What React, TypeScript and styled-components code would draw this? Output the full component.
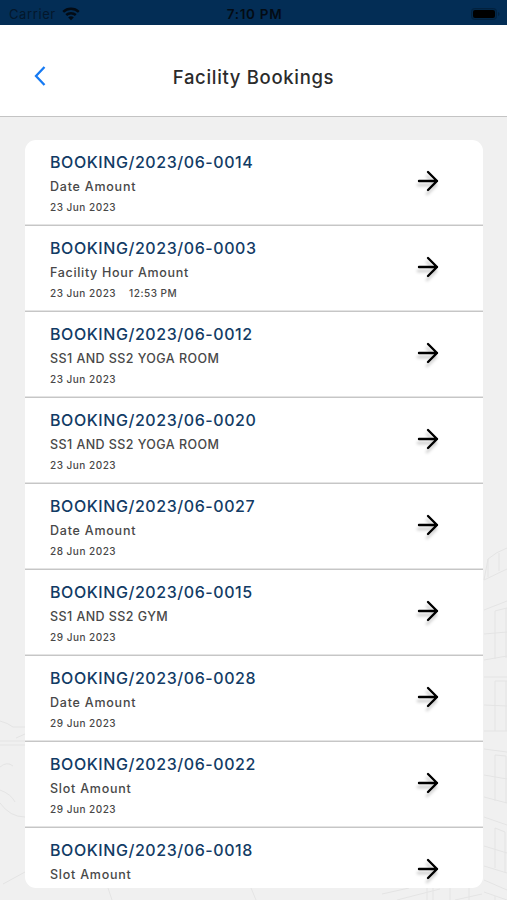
import React from "react";
import styled, { createGlobalStyle } from "styled-components";

const GlobalStyle = createGlobalStyle`
  * { box-sizing: border-box; }
  html, body, #root { margin: 0; height: 100%; }
  body { overflow: hidden; font-family: "Inter", "Liberation Sans", sans-serif; }
`;

const Screen = styled.div`
  width: 100%;
  height: 900px;
  display: flex;
  flex-direction: column;
  background: #f0f0f0;
  overflow: hidden;
`;

const StatusBar = styled.div`
  height: 25px;
  flex: none;
  display: grid;
  grid-template-columns: 1fr auto 1fr;
  align-items: center;
  padding: 2px 7px 0 9px;
  background: #032d55;
  color: #030b14;
  font-size: 13px;
`;

const Carrier = styled.div`
  display: flex;
  align-items: center;
  gap: 6px;
  letter-spacing: 0.6px;
  color: #04172b;
`;

const Clock = styled.div`
  font-weight: 600;
  font-size: 13.5px;
  letter-spacing: 0.7px;
`;

const Battery = styled.svg`
  justify-self: end;
  display: block;
`;

const Header = styled.header`
  height: 92px;
  flex: none;
  display: grid;
  grid-template-columns: 60px 1fr 60px;
  align-items: center;
  padding-top: 13px;
  background: #fff;
  border-bottom: 1px solid #c4c4c4;
`;

const BackButton = styled.button`
  border: 0;
  background: none;
  padding: 0 0 2px 33px;
  display: flex;
`;

const Title = styled.h1`
  margin: 0;
  text-align: center;
  font-size: 18.5px;
  line-height: 24px;
  font-weight: 500;
  letter-spacing: 0.68px;
  color: #2b2b2b;
`;

const Content = styled.main`
  flex: 1;
  min-height: 0;
  position: relative;
  padding: 23px 24px 12px 25px;
`;

const Backdrop = styled.svg`
  position: absolute;
  right: 0;
  bottom: 0;
`;

const List = styled.ul`
  position: relative;
  margin: 0;
  padding: 0;
  height: 100%;
  list-style: none;
  overflow: hidden;
  background: #fff;
  border-radius: 11px;
`;

const Row = styled.li`
  height: 86px;
  display: flex;
  align-items: center;
  justify-content: space-between;
  padding: 0 44px 0 25px;
  border-bottom: 1px solid #c6c6c6;
  box-shadow: inset 0 -1px #e4e4e4;
`;

const Details = styled.div`
  height: 100%;
  padding-top: 11px;
  white-space: nowrap;
`;

const Reference = styled.div`
  font-size: 16px;
  line-height: 22px;
  font-weight: 500;
  letter-spacing: 0.57px;
  color: #123b65;
`;

const Facility = styled.div<{ $tracking: number }>`
  padding-top: 5px;
  font-size: 12.5px;
  line-height: 18px;
  font-weight: 500;
  letter-spacing: ${(p) => p.$tracking}px;
  color: #484848;
`;

const Schedule = styled.div`
  display: flex;
  gap: 13px;
  padding-top: 5px;
  font-size: 10px;
  line-height: 13px;
  font-weight: 500;
  letter-spacing: 0.5px;
  color: #484848;
`;

const Arrow = styled.svg`
  display: block;
  overflow: visible;
  margin-top: -4px;
  filter: drop-shadow(-1px 4px 1.5px rgba(0, 0, 0, 0.22));
`;

type Booking = {
  id: string;
  facility: string;
  date?: string;
  time?: string;
  tracking: number;
};

const bookings: Booking[] = [
  { id: "0014", facility: "Date Amount", date: "23 Jun 2023", tracking: 0.77 },
  { id: "0003", facility: "Facility Hour Amount", date: "23 Jun 2023", time: "12:53 PM", tracking: 0.68 },
  { id: "0012", facility: "SS1 AND SS2 YOGA ROOM", date: "23 Jun 2023", tracking: 0.43 },
  { id: "0020", facility: "SS1 AND SS2 YOGA ROOM", date: "23 Jun 2023", tracking: 0.43 },
  { id: "0027", facility: "Date Amount", date: "28 Jun 2023", tracking: 0.77 },
  { id: "0015", facility: "SS1 AND SS2 GYM", date: "29 Jun 2023", tracking: 0.43 },
  { id: "0028", facility: "Date Amount", date: "29 Jun 2023", tracking: 0.77 },
  { id: "0022", facility: "Slot Amount", date: "29 Jun 2023", tracking: 0.77 },
  { id: "0018", facility: "Slot Amount", tracking: 0.77 },
];

const WifiIcon = () => (
  <svg width="18" height="14" viewBox="0 0 18 14" fill="none" stroke="#030b14" strokeWidth="2.5">
    <path d="M1.2 4.8C5.6.7 12.4.7 16.8 4.8" />
    <path d="M4.2 8C6.9 5.5 11.1 5.5 13.8 8" />
    <path d="M9 13.2 6.2 10.4C7.8 9 10.2 9 11.8 10.4Z" fill="#030b14" stroke="none" />
  </svg>
);

const BuildingSketch = () => (
  <Backdrop width="507" height="370" viewBox="0 530 507 370" fill="none" stroke="#e4e4e4" aria-hidden="true">
    <path d="M484 580 488 559Q496 552 507 548M488 577V559M499 571V553M484 580 507 569M484 610 507 601M495 659V611L507 608M506 608V658M484 634 507 632M484 660 507 656M484 677H507M495 731V681H507M506 681V731M484 705 507 706M484 731H507M484 749 507 752M495 801V755L506 756V803M484 775 507 779M484 797 507 803M484 817 507 825M495 868V828L505 832V873M484 846 507 853M484 866 507 873M484 880 507 890" />
    <path d="M0 721Q8 723 13 727L25 727M0 741H25M0 745H25M0 767Q7 761 13 766M0 790Q11 794 15 802M0 803Q10 817 25 817M16 738 25 734M3 884 25 872M108 888 112 900M251 888 256 900M382 894 409 888M397 900 440 889M427 888V900M433 888V900M450 888V900M455 900 482 894M469 888V900M484 892 507 900M495 896V900" />
  </Backdrop>
);

export default function App() {
  return (
    <>
      <GlobalStyle />
      <Screen>
        <StatusBar>
          <Carrier>Carrier <WifiIcon /></Carrier>
          <Clock>7:10 PM</Clock>
          <Battery width="29" height="12" viewBox="0 0 29 12">
            <rect x=".5" y=".5" width="25" height="11" rx="3" fill="#02284a" stroke="#02213e" />
            <rect x="2" y="2" width="22" height="8" rx="2" fill="#000" />
            <path d="M27 4v4q1.5-.5 1.5-2T27 4Z" fill="#02213e" />
          </Battery>
        </StatusBar>
        <Header>
          <BackButton aria-label="Back">
            <svg width="14" height="22" viewBox="0 0 14 22" fill="none" stroke="#167af3" strokeWidth="2.3">
              <path d="M11.5 2 3 11 11.5 20" />
            </svg>
          </BackButton>
          <Title>Facility Bookings</Title>
        </Header>
        <Content>
          <BuildingSketch />
          <List>
            {bookings.map((b) => (
              <Row key={b.id}>
                <Details>
                  <Reference>BOOKING/2023/06-{b.id}</Reference>
                  <Facility $tracking={b.tracking}>{b.facility}</Facility>
                  {b.date && (
                    <Schedule>
                      <span>{b.date}</span>
                      {b.time && <span>{b.time}</span>}
                    </Schedule>
                  )}
                </Details>
                <Arrow width="22" height="22" viewBox="0 0 22 22" fill="none" stroke="#000" strokeWidth="2.4" strokeLinecap="round" strokeLinejoin="round">
                  <path d="M2 11H20M11 2 20 11 11 20" />
                </Arrow>
              </Row>
            ))}
          </List>
        </Content>
      </Screen>
    </>
  );
}
